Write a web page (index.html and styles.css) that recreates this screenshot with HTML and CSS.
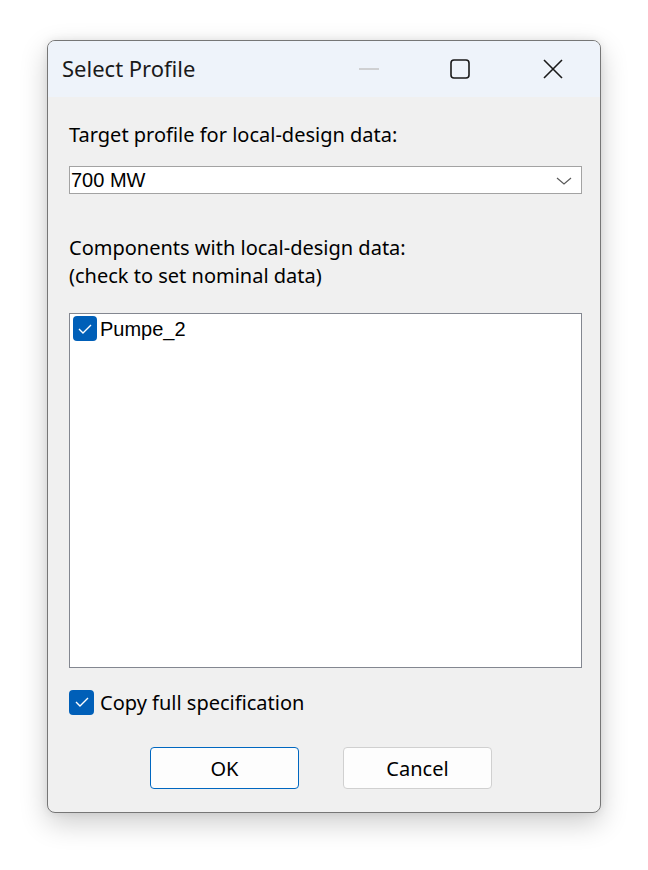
FILE: index.html
```html
<!DOCTYPE html>
<html>
<head>
<meta charset="utf-8">
<link rel="stylesheet" href="styles.css">
</head>
<body>
<div class="window">
  <div class="titlebar">
    <span class="title">Select Profile</span>
    <div class="caption-btns">
      <svg class="cap cap-min" width="20" height="20" viewBox="0 0 20 20"><line x1="0" y1="10" x2="20" y2="10" stroke="#c4c4c4" stroke-width="1.5"/></svg>
      <svg class="cap cap-max" width="20" height="20" viewBox="0 0 20 20"><rect x="1" y="1" width="18" height="18" rx="3" fill="none" stroke="#1a1a1a" stroke-width="1.6"/></svg>
      <svg class="cap cap-close" width="20" height="20" viewBox="0 0 20 20"><path d="M1 1 L19 19 M19 1 L1 19" stroke="#1a1a1a" stroke-width="1.6" fill="none"/></svg>
    </div>
  </div>
  <div class="content">
    <div class="label label-target">Target profile for local-design data:</div>
    <div class="combo">
      <span class="combo-text">700 MW</span>
      <svg class="chevron" width="16" height="8" viewBox="0 0 16 8"><path d="M1 1 L8 7 L15 1" fill="none" stroke="#5a5a5a" stroke-width="1.2"/></svg>
    </div>
    <div class="label label-comp">Components with local-design data:<br>(check to set nominal data)</div>
    <div class="listbox">
      <div class="list-item">
        <span class="check check-list"><svg width="14" height="10" viewBox="0 0 14 10"><path d="M1 5 L5 9 L13 1" fill="none" stroke="#fff" stroke-width="1.4"/></svg></span>
        <span class="item-text">Pumpe_2</span>
      </div>
    </div>
    <div class="copy-row">
      <span class="check check-copy"><svg width="14" height="10" viewBox="0 0 14 10"><path d="M1 5 L5 9 L13 1" fill="none" stroke="#fff" stroke-width="1.4"/></svg></span>
      <span class="copy-text">Copy full specification</span>
    </div>
    <div class="buttons">
      <div class="btn btn-ok">OK</div>
      <div class="btn btn-cancel">Cancel</div>
    </div>
  </div>
</div>
</body>
</html>
```

FILE: styles.css
```css
html, body {
  margin: 0;
  padding: 0;
  background: #ffffff;
}
body {
  width: 648px;
  height: 870px;
  overflow: hidden;
  font-family: "Noto Sans", "Open Sans", sans-serif;
  color: #000;
}
.window {
  margin-left: 47px;
  margin-top: 40px;
  width: 552px;
  height: 771px;
  border: 1px solid #767676;
  border-radius: 8px;
  background: #f0f0f0;
  box-shadow: 0 10px 28px rgba(0,0,0,0.2), 0 0 8px rgba(0,0,0,0.08);
  overflow: hidden;
  display: flex;
  flex-direction: column;
}
.titlebar {
  height: 56px;
  background: #eef3fa;
  display: flex;
  align-items: center;
  flex-shrink: 0;
}
.title {
  margin-left: 14px;
  font-size: 22px;
  color: #1a1a1a;
  margin-top: -2px;
}
.caption-btns {
  display: flex;
  align-items: center;
  margin-left: auto;
  margin-top: -1px;
}
.cap-min { margin-right: 71px; }
.cap-max { margin-right: 73px; }
.cap-close { margin-right: 37px; }
.content {
  padding-left: 21px;
  padding-right: 18px;
  display: flex;
  flex-direction: column;
}
.label {
  font-size: 20px;
  line-height: 28px;
}
.label-target {
  margin-top: 24px;
}
.combo {
  margin-top: 17px;
  height: 26px;
  border: 1px solid #a3a3a3;
  background: #fff;
  display: flex;
  align-items: center;
}
.combo-text {
  margin-left: 1px;
  font-family: "Liberation Sans", Arial, sans-serif;
  font-size: 20px;
  line-height: 26px;
}
.chevron {
  margin-left: auto;
  margin-right: 9px;
  margin-top: 1px;
}
.label-comp {
  margin-top: 40px;
}
.listbox {
  margin-top: 23px;
  height: 353px;
  border: 1px solid #838790;
  background: #fff;
}
.list-item {
  display: flex;
  align-items: center;
  margin-top: 2px;
  margin-left: 3px;
  height: 25px;
}
.check {
  width: 25px;
  height: 25px;
  border-radius: 4px;
  background: #005fb8;
  display: flex;
  align-items: center;
  justify-content: center;
  flex-shrink: 0;
}
.check-list {
  width: 24px;
}
.item-text {
  margin-left: 3px;
  margin-top: 2px;
  font-family: "Liberation Sans", Arial, sans-serif;
  font-size: 20px;
}
.copy-row {
  margin-top: 21px;
  display: flex;
  align-items: center;
  height: 26px;
}
.copy-text {
  margin-left: 6px;
  font-size: 20px;
}
.buttons {
  margin-top: 32px;
  display: flex;
}
.btn {
  width: 147px;
  height: 40px;
  border-radius: 4px;
  background: #fdfdfd;
  display: flex;
  align-items: center;
  justify-content: center;
  font-size: 20px;
}
.btn-ok {
  margin-left: 81px;
  border: 1px solid #0067c0;
}
.btn-cancel {
  margin-left: 44px;
  border: 1px solid #d0d0d0;
}
```
